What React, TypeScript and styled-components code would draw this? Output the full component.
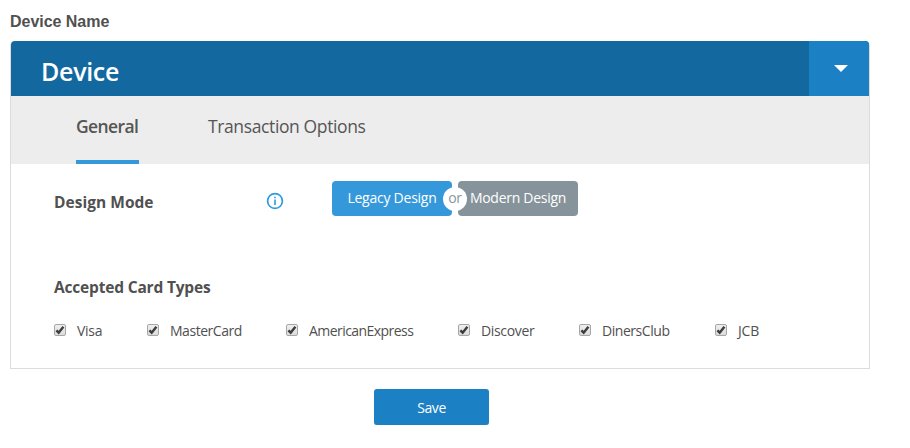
import React from 'react';
import styled, { createGlobalStyle } from 'styled-components';

const GlobalStyle = createGlobalStyle`
  *, *::before, *::after { box-sizing: border-box; }
  body {
    margin: 0;
    background: #fff;
    color: #505050;
    font-family: "Segoe UI", "Open Sans", "Noto Sans", sans-serif;
  }
  button { font-family: inherit; border: 0; padding: 0; margin: 0; cursor: pointer; }
`;

const Page = styled.main`
  width: 860px;
  margin-left: 10px;
  padding-top: 11px;
  display: flex;
  flex-direction: column;
`;

const FieldLabel = styled.label`
  height: 30px;
  font: bold 16px/21px "Liberation Sans", Arial, sans-serif;
  letter-spacing: -0.03px;
`;

const Card = styled.section`
  height: 328px;
  border: 1px solid #dcdcdc;
  border-top: 0;
  border-radius: 5px 5px 0 0;
`;

const Header = styled.header`
  height: 55px;
  display: flex;
  justify-content: space-between;
  background: #13699f;
  border-radius: 4px 4px 0 0;
  overflow: hidden;
`;

const Title = styled.h1`
  margin: 0;
  padding-left: 30px;
  color: #fff;
  font-size: 25px;
  font-weight: 600;
  line-height: 60px;
  letter-spacing: -0.3px;
`;

const Toggle = styled.button`
  width: 60px;
  display: flex;
  align-items: center;
  justify-content: center;
  background: #1b80c4;
  padding-left: 4px;
`;

const Tabs = styled.nav`
  height: 68px;
  padding-left: 65px;
  display: flex;
  gap: 69px;
  background: #ededed;
`;

const Tab = styled.button<{ $active?: boolean }>`
  width: ${(p) => (p.$active ? 63 : 160)}px;
  height: 68px;
  padding-bottom: ${(p) => (p.$active ? 4 : 8)}px;
  background: none;
  border-bottom: ${(p) => (p.$active ? '4px solid #3498db' : '0')};
  color: #555;
  font-size: 17.5px;
  font-weight: ${(p) => (p.$active ? 600 : 400)};
  letter-spacing: ${(p) => (p.$active ? '-0.6px' : '-0.38px')};
  text-align: left;
  white-space: nowrap;
`;

const Body = styled.div`
  padding: 17px 43px 0;
`;

const ModeRow = styled.div`
  height: 35px;
  display: grid;
  grid-template-columns: 212px 66px auto;
  align-items: start;
`;

const Heading = styled.h2`
  margin: 0;
  font-size: 15.5px;
  font-weight: 700;
  line-height: 20px;
  letter-spacing: -0.18px;
  white-space: nowrap;
`;

const ModeHeading = styled(Heading)`
  padding-top: 11px;
  letter-spacing: 0.03px;
`;

const CardsHeading = styled(Heading)`
  margin-top: 61px;
`;

const InfoIcon = styled.svg`
  margin-top: 11px;
  display: block;
`;

const Choice = styled.div`
  display: flex;
  gap: 6px;
  position: relative;
`;

const ChoiceButton = styled.button<{ $primary?: boolean }>`
  width: 120px;
  height: 35px;
  padding-bottom: 2px;
  border-radius: 4px;
  color: #fff;
  background: ${(p) => (p.$primary ? '#3498db' : '#86939b')};
  font-size: 14px;
  letter-spacing: ${(p) => (p.$primary ? -0.25 : -0.28)}px;
  white-space: nowrap;
`;

const OrBadge = styled.span`
  position: absolute;
  left: 111px;
  top: 6px;
  width: 24px;
  height: 24px;
  border-radius: 50%;
  background: #fff;
  color: #8a969e;
  font-size: 14px;
  line-height: 22px;
  letter-spacing: -0.3px;
  text-align: center;
`;

const Options = styled.div`
  margin-top: 24px;
  display: grid;
  grid-template-columns: 93px 139px 172px 121px 136px auto;
`;

const Option = styled.label`
  height: 20px;
  display: flex;
  align-items: center;
`;

const OptionText = styled.span<{ $spacing: number }>`
  margin-left: 11px;
  font-size: 14px;
  line-height: 18px;
  letter-spacing: ${(p) => p.$spacing}px;
  white-space: nowrap;
`;

const Box = styled.span`
  width: 12px;
  height: 12px;
  margin-bottom: 2px;
  border: 1px solid #a6a6a6;
  border-radius: 2px;
  background: linear-gradient(#efefef, #dcdcdc);
  display: flex;
`;

const Save = styled.button`
  width: 115px;
  height: 36px;
  margin: 20px 0 0 364px;
  padding-top: 1px;
  border-radius: 3px;
  background: #1b80c4;
  box-shadow: 0 1px 1px rgba(0, 0, 0, 0.12);
  color: #fff;
  font-size: 14px;
  letter-spacing: -0.4px;
`;

const cardTypes = [
  { name: 'Visa', spacing: -0.3 },
  { name: 'MasterCard', spacing: -0.47 },
  { name: 'AmericanExpress', spacing: -0.55 },
  { name: 'Discover', spacing: -0.35 },
  { name: 'DinersClub', spacing: -0.45 },
  { name: 'JCB', spacing: -0.2 },
];

export default function App() {
  return (
    <>
      <GlobalStyle />
      <Page>
        <FieldLabel>Device Name</FieldLabel>
        <Card>
          <Header>
            <Title>Device</Title>
            <Toggle aria-label="Toggle device">
              <svg width="14" height="7" viewBox="0 0 14 7">
                <path d="M0 0H14L7 7Z" fill="#fff" />
              </svg>
            </Toggle>
          </Header>
          <Tabs>
            <Tab $active>General</Tab>
            <Tab>Transaction Options</Tab>
          </Tabs>
          <Body>
            <ModeRow>
              <ModeHeading>Design Mode</ModeHeading>
              <InfoIcon width="18" height="18" viewBox="0 0 18 18">
                <circle cx="9" cy="9" r="7.4" fill="none" stroke="#2f9ae0" strokeWidth="1.7" />
                <path d="M8.2 4.7h1.6v1.6H8.2zM8.2 7.5h1.6v5.5H8.2z" fill="#2f9ae0" />
              </InfoIcon>
              <Choice>
                <ChoiceButton $primary>Legacy Design</ChoiceButton>
                <ChoiceButton>Modern Design</ChoiceButton>
                <OrBadge>or</OrBadge>
              </Choice>
            </ModeRow>
            <CardsHeading>Accepted Card Types</CardsHeading>
            <Options>
              {cardTypes.map((c) => (
                <Option key={c.name}>
                  <Box>
                    <svg width="10" height="10" viewBox="0 0 10 10">
                      <path d="M1.4 5.3L3.7 7.7L8.4 1.7" fill="none" stroke="#3c3c3c" strokeWidth="2.4" />
                    </svg>
                  </Box>
                  <OptionText $spacing={c.spacing}>{c.name}</OptionText>
                </Option>
              ))}
            </Options>
          </Body>
        </Card>
        <Save>Save</Save>
      </Page>
    </>
  );
}
